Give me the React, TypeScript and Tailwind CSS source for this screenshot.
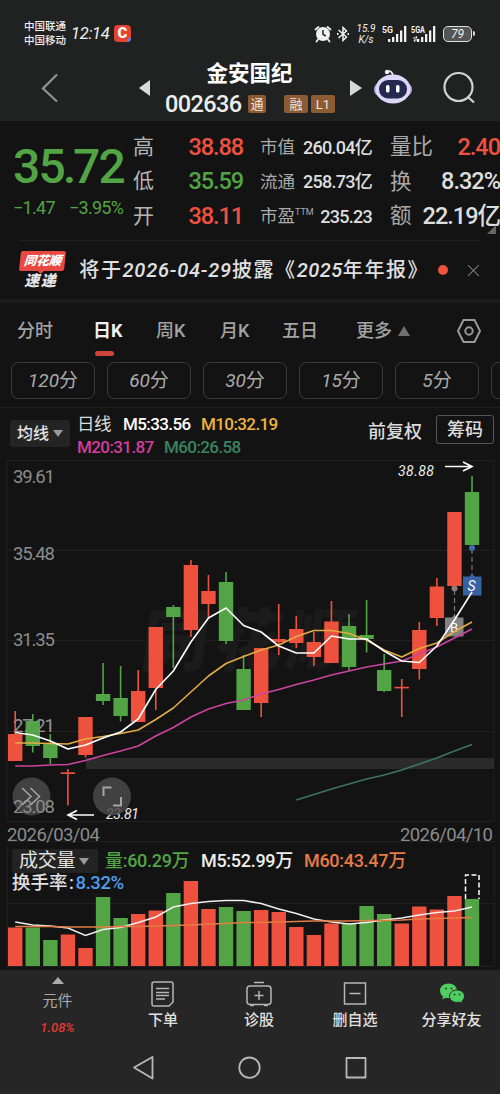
import React from "react";

const UP = "#ee523f";
const DOWN = "#52a444";

// [high, open/close top, open/close bottom, low, volume top, rising]
type Candle = [number, number, number, number, number, boolean];

const candles: Candle[] = [
  [711, 734, 761, 761, 927.5, true],
  [714, 721, 746, 752.5, 927.5, false],
  [734, 744, 758, 764, 940, false],
  [769, 772.3, 774, 805.5, 934.5, true],
  [717, 717, 755, 757.5, 948, true],
  [663, 694, 701, 705, 897, false],
  [666, 698, 716, 721.5, 918, false],
  [670, 691, 722, 722, 914, true],
  [627, 627, 688, 710, 910.5, true],
  [605, 607, 617, 668, 893, false],
  [560, 565, 630, 637, 881, true],
  [575, 591, 604, 618, 909, true],
  [572, 582, 641, 644, 907, false],
  [655, 669, 710, 710, 911, false],
  [648, 648, 703, 717, 910, true],
  [604, 639, 642, 655, 912, true],
  [616, 629, 643, 648, 927, true],
  [632, 642, 657, 666, 935, true],
  [601, 621.5, 663, 663, 923.5, true],
  [614, 626, 667, 671, 923.5, false],
  [600, 635, 639, 652.5, 906, false],
  [654, 670, 691, 692, 914, false],
  [679, 686.8, 688.4, 717, 923.5, true],
  [622, 630, 669, 679.5, 906.5, true],
  [578, 586.5, 618, 626, 909.5, true],
  [512, 512, 586, 586, 896, true],
  [476, 492, 545, 545, 899, false],
];

const ma5 = [732.5, 735, 741, 749, 745, 738, 732, 719, 689.5, 671, 642, 618, 608, 625.5, 632, 646, 653, 653, 636, 639, 639, 651, 661, 662.5, 646, 620, 592];
const ma10 = [743, 743, 743.5, 744, 739, 736.5, 733.5, 730, 719.5, 708, 692, 676, 663.5, 656.5, 650, 645, 636.5, 630.5, 630.5, 633.5, 640, 650, 657, 648.5, 643, 631.5, 622];
const ma20 = [766, 766, 765, 764.5, 760.5, 755.5, 751, 746, 736, 727.5, 717, 709, 703.5, 700, 694, 689.5, 684.5, 680, 675, 671, 667, 664, 661, 654, 647, 638, 629];
const ma60 = [800, 794.5, 789, 784, 779, 775, 770, 764, 758, 751, 744.5];
const vol5 = [922, 925, 926, 928, 935.5, 929.5, 927.5, 922.5, 917, 907, 903.5, 901.5, 900.5, 900.5, 903.5, 909, 913.5, 919, 922, 924, 922.5, 920, 918, 915, 912.5, 911, 907];
const vol60 = [926.5, 926.5, 926.5, 927, 927, 927, 926.5, 926.5, 926, 925.5, 925, 924, 923.5, 922.5, 922.5, 922, 921.5, 921, 921, 921, 920.5, 920.5, 920, 919, 918.5, 918, 917.5];

const cx = (i: number) => 15.2 + i * 17.57;
const points = (ys: number[], from = 0) => ys.map((y, i) => `${cx(i + from)},${y}`).join(" ");

function SignalBars({ label, small }: { label: string; small?: boolean }) {
  return (
    <svg width="27" height="20" viewBox="0 0 27 20" fill="#f1f1f1">
      <text x="0" y="8.5" fontSize="9.5" fontWeight="700" textLength={small ? 14 : 11} lengthAdjust="spacingAndGlyphs">{label}</text>
      {small && <path d="M2 14h4l-1-2M7 16H3l1 2" stroke="#f1f1f1" fill="none" />}
      <path d="M6 15h2.3v3H6zM10 13h2.3v5H10zM14 10h2.3v8H14zM18 6.500h2.3V18H18zM22 2h2.300v16H22z" />
    </svg>
  );
}

function StatusBar() {
  return (
    <div className="flex h-[67px] items-center pl-6 pr-[25px] text-[#f1f1f1]">
      <div className="w-[47px] text-[10.5px] font-medium leading-[14px]">
        <div>中国联通</div>
        <div>中国移动</div>
      </div>
      <div className="w-[43px] text-[16.5px] italic leading-5 tracking-[-0.3px]">12:14</div>
      <div className="relative flex size-[17px] items-center justify-center overflow-hidden rounded-[4px] bg-[#e5432f] text-[15px] font-black leading-none text-white">
        C
        <span className="absolute -bottom-0.5 -right-0.5 size-[6px] rounded-full bg-[#5c84dd]" />
      </div>
      <div className="ml-auto flex items-center">
        <svg width="18" height="18" viewBox="0 0 18 18">
          <path d="M4 14.500 2.500 16.500M14 14.500l1.500 2M1.500 4.500 4.500 2M16.500 4.500 13.500 2" stroke="#f1f1f1" strokeWidth="1.800" strokeLinecap="round" />
          <circle cx="9" cy="9" r="7" fill="#f1f1f1" />
          <path d="M9 5v4.300l2.800 1.700" stroke="#202221" strokeWidth="1.500" fill="none" />
        </svg>
        <svg className="ml-1" width="14" height="18" viewBox="0 0 14 18" fill="none" stroke="#f1f1f1" strokeWidth="1.500">
          <path d="M2.500 5 10.500 12 7 15.500V2.500L10.500 6 2.500 13" />
          <path d="M1 9h1.500M11.500 9H13" strokeWidth="2" />
        </svg>
        <div className="ml-[6px] w-[20px] text-center text-[10px] italic leading-[11px]">
          <div>15.9</div>
          <div>K/s</div>
        </div>
        <div className="ml-[6px] flex gap-[2px]">
          <SignalBars label="5G" />
          <SignalBars label="5GA" small />
        </div>
        <div className="ml-[5px] flex h-[16px] w-[29px] items-center justify-center rounded-[5px] border-[1.5px] border-[#dedede] bg-[#555] text-[12px] italic leading-none">79</div>
        <div className="ml-px h-[5px] w-[2px] rounded-r bg-[#dedede]" />
      </div>
    </div>
  );
}

function Tag({ children, className }: { children: React.ReactNode; className: string }) {
  return <span className={`flex h-[18px] items-center justify-center rounded-[2px] bg-[#8d5b33] text-[13px] leading-none text-[#f3e5d8] ${className}`}>{children}</span>;
}

function TitleBar() {
  return (
    <div className="flex h-[54px] pl-[41px] pt-[3px]">
      <svg className="mt-[3px]" width="18" height="30" viewBox="0 0 18 30" fill="none" stroke="#929393" strokeWidth="2.200">
        <path d="M16 1.500 2 15.500l14 13" />
      </svg>
      <svg className="ml-[80px] mt-[9px]" width="12" height="18" viewBox="0 0 12 18" fill="#d9d9d9">
        <path d="M11 1v16L0 9z" />
      </svg>
      <div className="ml-[14px] -mt-[8px] w-[171px]">
        <div className="-mt-px pr-[2px] pt-px text-center text-[21.5px] font-bold leading-[24px] text-white">金安国纪</div>
        <div className="mt-[8px] flex items-center">
          <span className="w-[83px] text-[23.5px] font-medium leading-[20px] tracking-[-0.6px] text-[#eee]">002636</span>
          <Tag className="w-[18px]">通</Tag>
          <Tag className="ml-[18px] w-6">融</Tag>
          <Tag className="ml-[3px] w-6">L1</Tag>
        </div>
      </div>
      <svg className="ml-[14px] mt-[9px]" width="12" height="18" viewBox="0 0 12 18" fill="#d9d9d9">
        <path d="M0 1v16l12-8z" />
      </svg>
      <svg className="ml-[11px] -mt-[2px]" width="40" height="38" viewBox="0 0 40 38">
        <path d="M14 3.500q5-1.500 6 4" fill="none" stroke="#e8e4f6" strokeWidth="1.800" />
        <circle cx="14" cy="4" r="2.200" fill="#f3f1fa" />
        <rect x="1" y="15" width="38" height="13" rx="6" fill="#aaa1dc" />
        <ellipse cx="20" cy="21" rx="17.500" ry="14.500" fill="#dcd7f8" />
        <rect x="6" y="12" width="28" height="18.500" rx="9" fill="#252951" />
        <rect x="13" y="17" width="3.500" height="7.500" rx="1.500" fill="#fff" />
        <rect x="23" y="17" width="3.500" height="7.500" rx="1.500" fill="#fff" />
      </svg>
      <svg className="ml-[30px] mt-[1px]" width="34" height="34" viewBox="0 0 34 34" fill="none" stroke="#d2d2d2" strokeWidth="2.200">
        <circle cx="15.500" cy="16" r="14" />
        <path d="m25.500 26.500 5.500 5" />
      </svg>
    </div>
  );
}

const quotes = [
  { a: "高", av: "38.88", ac: "text-[#ee523f]", b: "市值", bv: "260.04亿", c: "量比", cv: "2.40", cc: "text-[#ee523f]" },
  { a: "低", av: "35.59", ac: "text-[#52a444]", b: "流通", bv: "258.73亿", c: "换", cv: "8.32%", cc: "text-[#dedede]" },
  { a: "开", av: "38.11", ac: "text-[#ee523f]", b: "市盈", bv: "235.23", c: "额", cv: "22.19亿", cc: "text-[#dedede]" },
];

function Quote() {
  return (
    <div className="relative flex h-[119px] pt-[9px]">
      <div className="w-[133px] pl-[13px] text-[#52a444]">
        <div className="mt-[14px] flex text-[48px] font-medium leading-[46px] tracking-[-1.8px]">
          <span className="w-[50px]">35</span>
          <span className="w-[10px]">.</span>
          <span>72</span>
        </div>
        <div className="mt-[6px] flex gap-[14px] text-[18px] leading-6 tracking-[-0.7px]">
          <span>−1.47</span>
          <span>−3.95%</span>
        </div>
      </div>
      <div className="flex-1">
        {quotes.map((q) => (
          <div key={q.a} className="flex h-[34.5px] items-center whitespace-nowrap">
            <span className="w-[40px] text-[21px] text-[#b5b5b5]">{q.a}</span>
            <span className={`w-[70px] text-right text-[23.5px] font-medium tracking-[-1.1px] ${q.ac}`}>{q.av}</span>
            <span className="ml-[17px] flex w-[112px] items-center justify-between">
              <span className="text-[17.5px] text-[#aaa]">
                {q.b}
                {q.b === "市盈" && <sup className="-top-[7px] text-[9px]">TTM</sup>}
              </span>
              <span className="text-[18px] font-medium tracking-[-0.75px] text-[#dedede]">{q.bv}</span>
            </span>
            <span className="ml-[18px] flex w-[110px] items-center justify-between">
              <span className="text-[21.5px] text-[#aaa]">{q.c}</span>
              <span className={`text-[23.5px] font-medium tracking-[-1px] ${q.cc}`}>{q.cv}</span>
            </span>
          </div>
        ))}
      </div>
      <span className="absolute bottom-[6px] right-1 border-b-[9px] border-l-[9px] border-b-[#666] border-l-transparent" />
    </div>
  );
}

function Notice() {
  return (
    <div className="mx-[20px] flex h-[59px] items-center border-t border-[#202020]">
      <div className="w-[46px] text-center font-black italic leading-none">
        <div className="relative flex h-5 -skew-x-6 items-center justify-center rounded-[2px] bg-[#e84a43] text-[12.5px] text-white">
          同花顺
          <span className="absolute -bottom-[3px] left-[18px] border-x-[4px] border-t-[4px] border-x-transparent border-t-[#e84a43]" />
        </div>
        <div className="mt-[3px] pr-[4px] text-[15px] tracking-[1.5px] text-[#e6e6e6]">速递</div>
      </div>
      <div className="ml-[14px] w-[350px] whitespace-nowrap text-[20px] font-medium tracking-[1.6px] text-[#e0e0e0]">
        将于<span className="italic tracking-[0.8px]">2026-04-29</span>披露《<span className="italic tracking-[0.5px]">2025</span>年年报》
      </div>
      <span className="ml-[9px] size-[10px] shrink-0 rounded-full bg-[#ee523f]" />
      <svg className="ml-[19px]" width="13" height="13" viewBox="0 0 13 13" stroke="#777" strokeWidth="1.200">
        <path d="m1 1 11 11M12 1 1 12" />
      </svg>
    </div>
  );
}

const periods = [
  { name: "分时", w: "w-[76px]" },
  { name: "日K", w: "w-[63px]", on: true },
  { name: "周K", w: "w-[64px]" },
  { name: "月K", w: "w-[62px]" },
  { name: "五日", w: "w-[74px]" },
  { name: "更多", w: "w-[40px]" },
];

function Periods() {
  return (
    <>
      <div className="flex h-[59px] items-center pb-[4px] pl-[17px]">
        {periods.map((p) => (
          <div key={p.name} className={`relative whitespace-nowrap text-[18px] ${p.w} ${p.on ? "font-bold text-[#f0f0f0]" : "font-medium text-[#a3a3a3]"}`}>
            {p.name}
            {p.on && <span className="absolute -bottom-[12px] left-[2px] h-[5px] w-[19px] rounded-full bg-[#d0443b]" />}
          </div>
        ))}
        <span className="ml-[2px] border-x-[6px] border-b-[10px] border-x-transparent border-b-[#707070]" />
        <svg className="ml-[46px]" width="26" height="26" viewBox="0 0 26 26" fill="none" stroke="#999" strokeWidth="2">
          <path d="M7.500 2h11L24 13l-5.500 11h-11L2 13z" />
          <circle cx="13" cy="13" r="3.700" />
        </svg>
      </div>
      <div className="flex h-[46px] gap-3 overflow-hidden border-b border-[#1e1e1e] pl-[11px]">
        {["120", "60", "30", "15", "5", ""].map((n) => (
          <div key={n} className="flex h-[37px] w-[84px] shrink-0 items-center justify-center rounded-[7px] border border-[#3a3a3a] pt-[2px] text-[19px] text-[#aaa]">
            <span className="italic">{n}</span>
            {n && "分"}
          </div>
        ))}
      </div>
    </>
  );
}

function Averages() {
  return (
    <div className="flex h-[51px] pl-[10px]">
      <div className="mt-[12px] flex h-[27px] w-[60px] items-center justify-center gap-1 rounded-[3px] bg-[#242424] text-[16px] font-medium text-[#e2e2e2]">
        均线
        <span className="border-x-[5px] border-t-[7px] border-x-transparent border-t-[#999]" />
      </div>
      <div className="ml-[7px] mt-[5px] w-[291px] whitespace-nowrap text-[17px] font-medium leading-[23px] tracking-[-0.6px]">
        <div className="flex">
          <span className="w-[46px] text-[17.5px] font-normal text-[#ddd]">日线</span>
          <span className="w-[78px] text-white">M5:33.56</span>
          <span className="text-[#f0b43a]">M10:32.19</span>
        </div>
        <div className="flex">
          <span className="w-[87px] text-[#d13e9c]">M20:31.87</span>
          <span className="text-[#3b8360]">M60:26.58</span>
        </div>
      </div>
      <div className="mt-[12px] w-[68px] text-[18px] font-medium leading-[24px] text-[#ddd]">前复权</div>
      <div className="mt-[7px] flex h-[29px] w-[58px] items-center justify-center rounded-[3px] border border-[#555] text-[18px] font-medium text-[#ddd]">筹码</div>
    </div>
  );
}

function PriceChart() {
  return (
    <svg className="block" width="500" height="387" viewBox="0 459 500 387">
      <g stroke="#202020" fill="none">
        <path d="M7 460.500H494V821.500H7zM7 550.500h487M7 640.500h487M7 731.500h487M7 841.500h487" />
      </g>
      <text x="140" y="665" fontSize="68" fontWeight="900" fill="#1b1b1b" textLength="214" transform="skewX(-8) translate(92 0)">同花顺</text>
      <path d="M86 758h408v11H86z" fill="#2b2b2b" />
      <g fill="#8c8c8c" fontSize="18.500">
        <text x="13" y="482.500" textLength="42">39.61</text>
        <text x="13" y="559.500" textLength="42">35.48</text>
        <text x="13" y="645.500" textLength="42">31.35</text>
        <text x="13" y="731.500" textLength="42">27.21</text>
        <text x="7" y="841" textLength="93">2026/03/04</text>
        <text x="400" y="841" textLength="93">2026/04/10</text>
      </g>
      {candles.map(([hi, top, bottom, lo, , up], i) => (
        <g key={i} fill={up ? UP : DOWN}>
          <rect x={cx(i) - 0.8} y={hi} width="1.600" height={lo - hi} />
          <rect x={cx(i) - 7.2} y={top} width="14.400" height={bottom - top} />
        </g>
      ))}
      <text x="13" y="731.500" fontSize="18.500" textLength="42" fill="#999" opacity="0.350">27.21</text>
      <path d="M454.500 590v30M472 549v30" stroke="#777" strokeWidth="1.200" strokeDasharray="5 3" />
      <circle cx="454.500" cy="588.500" r="3" fill="#8b7e78" />
      <circle cx="472" cy="548" r="3" fill="#3c6eb4" />
      <path d="M446 617.500h6l2.500-3 2.500 3h6.500v19H445v-19z" fill="#828282" />
      <path d="M463 576.500h6.500l2.500-3 2.500 3h7v19h-18.500z" fill="#3661a5" />
      <text x="450" y="632" fontSize="13" fill="#fff">B</text>
      <text x="467.500" y="591" fontSize="14" fill="#fff" fontStyle="italic">S</text>
      <g fill="none" strokeWidth="1.600" strokeLinejoin="round">
        <polyline points={points(ma60, 16)} stroke="#3b7560" />
        <polyline points={points(ma20)} stroke="#cc43a0" />
        <polyline points={points(ma10)} stroke="#e3ac43" />
        <polyline points={points(ma5)} stroke="#fff" />
      </g>
      <g stroke="#fff" strokeWidth="1.600" fill="none">
        <path d="M445 466.500h26M463 462l9 4.500-9 4.500" />
        <path d="M94 815H68M77 810.500l-9 4.500 9 4.500" />
      </g>
      <g fill="#eee" fontSize="14" fontStyle="italic">
        <text x="398" y="475.500" textLength="36">38.88</text>
        <text x="106" y="819" textLength="33">23.81</text>
      </g>
      <g fill="#4a4a4a" opacity="0.850">
        <circle cx="31.500" cy="796.500" r="19" />
        <circle cx="112" cy="796.500" r="19" />
      </g>
      <text x="13" y="812.500" textLength="42" fontSize="18.500" fill="#8c8c8c">23.08</text>
      <g fill="none" stroke="#a5a5a5" strokeWidth="1.600">
        <path d="m22 788 9 8.500-9 8.500M30.500 788l9 8.500-9 8.500" />
        <path d="M103.500 796v-8.500h8M113 805.500h8V797" strokeWidth="2" />
      </g>
    </svg>
  );
}

function VolumeChart() {
  return (
    <div className="relative h-[124px]">
      <svg className="block" width="500" height="124" viewBox="0 846 500 124">
        <path d="M7.500 846v120M494.500 846v120M7 903.500h487M7 966.500h487" stroke="#202020" />
        {candles.map((c, i) => (
          <rect key={i} x={cx(i) - 7.2} y={c[4]} width="14.400" height={966 - c[4]} fill={c[5] ? UP : DOWN} />
        ))}
        <path d="M465.500 899v-24h13.500v24" fill="none" stroke="#fff" strokeWidth="1.500" strokeDasharray="5 2.500" />
        <g fill="none" strokeWidth="1.500">
          <polyline points={points(vol5)} stroke="#eee" />
          <polyline points={points(vol60)} stroke="#e57c45" />
        </g>
      </svg>
      <div className="absolute left-[12px] top-[3px] whitespace-nowrap text-[18px] font-medium leading-[22px] tracking-[-0.3px]">
        <div className="flex items-center">
          <div className="flex h-[24px] w-[86px] items-center gap-1 rounded-[2px] bg-[#232323] pl-[7px] text-[19px] font-normal text-[#e2e2e2]">
            成交量
            <span className="border-x-[5px] border-t-[7px] border-x-transparent border-t-[#999]" />
          </div>
          <span className="ml-[7px] w-[96px] text-[#52a444]">量:60.29万</span>
          <span className="w-[103px] text-[#eee]">M5:52.99万</span>
          <span className="text-[#e57c45]">M60:43.47万</span>
        </div>
        <div className="-mt-px text-[18.5px] tracking-normal text-[#e2e2e2]">
          换手率<span className="inline-block w-[8px] text-center">:</span><span className="tracking-[-0.4px] text-[#4e9ff0]">8.32%</span>
        </div>
      </div>
    </div>
  );
}

const actionIcons: Record<string, React.ReactNode> = {
  下单: (
    <>
      <path d="M5 2h17a2 2 0 0 1 2 2v18l-4 4H5a2 2 0 0 1-2-2V4a2 2 0 0 1 2-2z" />
      <path d="M7 8.500h13M7 12.500h13M7 15.500h13M7 19h9" />
    </>
  ),
  诊股: (
    <>
      <rect x="2" y="6" width="24" height="18.500" rx="3" />
      <path d="M9 2.500h10M14 11v9M9.500 15.500h9M5 25.500h4M19 25.500h4" />
    </>
  ),
  删自选: <path d="M3.500 3h21v21h-21zM8.500 13.500h11" />,
};

function Actions() {
  return (
    <div className="flex h-[76px] bg-[#262626] pl-[9px] pt-[7px]">
      <div className="mr-[9px] flex w-[97px] flex-col items-center">
        <span className="border-x-[6px] border-b-[7px] border-x-transparent border-b-[#aaa]" />
        <span className="mt-[7px] text-[15px] leading-[20px] text-[#aaa]">元件</span>
        <span className="mt-[8px] text-[13px] font-medium italic leading-[18px] text-[#e53931]">1.08%</span>
      </div>
      {["下单", "诊股", "删自选"].map((name) => (
        <div key={name} className="mt-[3px] flex w-[96px] flex-col items-center">
          <svg width="28" height="28" viewBox="0 0 28 28" fill="none" stroke="#b5b5b5" strokeWidth="1.500">{actionIcons[name]}</svg>
          <span className="mt-[2px] text-[15px] font-medium leading-[20px] text-[#e0e0e0]">{name}</span>
        </div>
      ))}
      <div className="mt-[3px] flex w-[97px] flex-col items-center">
        <svg width="28" height="28" viewBox="0 0 28 28">
          <path d="M10.500 3.500c5 0 8.500 3.200 8.500 7.300s-3.500 7.300-8.500 7.300q-1.500 0-3-.4l-3 1.800.5-3C3 15 2 13 2 10.800 2 6.700 5.500 3.500 10.500 3.500z" fill="#4fcd62" />
          <path d="M19 10c4.300 0 7.500 2.700 7.500 6.200 0 2-1 3.700-2.500 4.800l.4 2.600-2.600-1.600q-1.300.5-2.800.5c-4.300 0-7.500-2.800-7.500-6.300S14.700 10 19 10z" fill="#4fcd62" stroke="#262626" />
          <g fill="#24552c">
            <circle cx="8" cy="8.500" r="1.100" />
            <circle cx="13.500" cy="8.500" r="1.100" />
            <circle cx="16.500" cy="14.500" r="1" />
            <circle cx="21.500" cy="14.500" r="1" />
          </g>
        </svg>
        <span className="mt-[2px] text-[15px] font-medium leading-[20px] text-[#e0e0e0]">分享好友</span>
      </div>
    </div>
  );
}

function NavBar() {
  return (
    <div className="flex h-[49px] flex-1 items-start gap-[82px] bg-[#262626] pl-[132px] pt-[9px]">
      {["M20.500 2v21.500L2 12.500z", "M11.500 2.500a10.200 10.200 0 1 1 0 20.400 10.200 10.200 0 0 1 0-20.400z", "M2.500 3h19v19.500h-19z"].map((d) => (
        <svg key={d} width="24" height="25" viewBox="0 0 24 25" fill="none" stroke="#b8b8b8" strokeWidth="1.800" strokeLinejoin="round">
          <path d={d} />
        </svg>
      ))}
    </div>
  );
}

export default function App() {
  return (
    <div className="flex h-[1094px] w-[500px] flex-col overflow-hidden bg-[#131313] font-[Roboto,'Noto_Sans_CJK_SC',sans-serif]">
      <header className="h-[121px] bg-[#202221]">
        <StatusBar />
        <TitleBar />
      </header>
      <Quote />
      <Notice />
      <div className="h-[4px] bg-[#1b1b1b]" />
      <Periods />
      <Averages />
      <PriceChart />
      <VolumeChart />
      <Actions />
      <NavBar />
    </div>
  );
}
